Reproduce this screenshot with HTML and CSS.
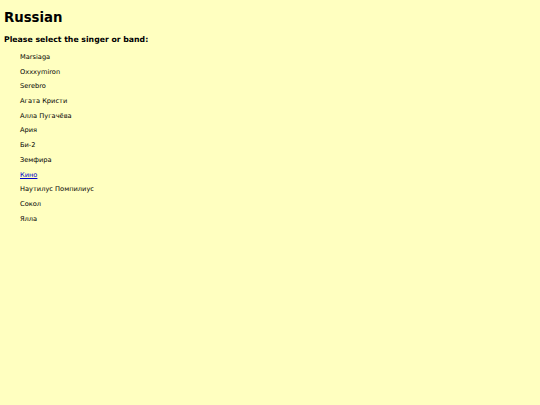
FILE: index.html
```html
<!DOCTYPE html>
<html>
<head>
<meta charset="utf-8">
<link rel="stylesheet" href="styles.css">
</head>
<body>
<h1 class="title">Russian</h1>
<h2 class="prompt">Please select the singer or band:</h2>
<ul class="list">
<li>Marsiaga</li>
<li>Oxxxymiron</li>
<li>Serebro</li>
<li>Агата Кристи</li>
<li>Алла Пугачёва</li>
<li>Ария</li>
<li>Би-2</li>
<li>Земфира</li>
<li><a class="link" href="#">Кино</a></li>
<li>Наутилус Помпилиус</li>
<li>Сокол</li>
<li>Ялла</li>
</ul>
</body>
</html>
```
FILE: styles.css
```css
html, body {
  background: #ffffc0;
}
body {
  margin: 0;
  padding: 10.4px 4px 0 4px;
  font-family: "DejaVu Sans", Verdana, sans-serif;
  color: #000;
}
.title {
  font-size: 13.3px;
  font-weight: bold;
  margin: 0 0 9px 0;
  line-height: 16px;
}
.prompt {
  font-size: 7.75px;
  font-weight: bold;
  margin: 0 0 4.4px 0;
  line-height: 10px;
}
.list {
  list-style: none;
  margin: 0;
  padding: 0 0 0 16px;
}
.list li {
  font-size: 6.65px;
  line-height: 14.73px;
}
.link {
  color: #0000cc;
  text-decoration: underline;
}
```
